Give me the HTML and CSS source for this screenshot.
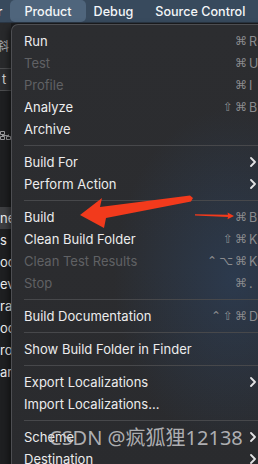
FILE: index.html
```html
<!DOCTYPE html>
<html>
<head>
<meta charset="utf-8">
<link rel="stylesheet" href="styles.css">
</head>
<body>
<div class="screen">
  <div class="menubar">
    <span class="mb-item mb-cut">r</span>
    <span class="mb-item active">Product</span>
    <span class="mb-item">Debug</span>
    <span class="mb-item">Source Control</span>
  </div>
  <div class="app">
    <div class="sidebar">
      <div class="sb-top"><span class="sb-glyph">斜</span></div>
      <div class="sb-bar">t</div>
      <div class="sb-mid">
        <svg class="sb-icon" width="11" height="9" viewBox="0 0 11 9"><path d="M0.5 0.5h4v3h-4zM0.5 5.5h4v3h-4zM6.5 5.5h4v3h-4zM2.5 3.5v2M8.5 3.5v2M2.5 4.5h6" fill="none" stroke="#9a9a9c" stroke-width="1"/></svg>
      </div>
      <div class="sb-row sel">ne</div>
      <div class="sb-row">s</div>
      <div class="sb-row">oc</div>
      <div class="sb-row">ev</div>
      <div class="sb-row">ra</div>
      <div class="sb-row">oc</div>
      <div class="sb-row">ro</div>
      <div class="sb-row">ar</div>
    </div>
  </div>

  <div class="menu">
    <div class="row"><span>Run</span><span class="sc"><span class="mod">⌘</span><span class="key">R</span></span></div>
    <div class="row dis"><span>Test</span><span class="sc"><span class="mod">⌘</span><span class="key">U</span></span></div>
    <div class="row dis"><span>Profile</span><span class="sc"><span class="mod">⌘</span><span class="key">I</span></span></div>
    <div class="row"><span>Analyze</span><span class="sc"><span class="mod">⇧⌘</span><span class="key">B</span></span></div>
    <div class="row"><span>Archive</span></div>
    <div class="sep"></div>
    <div class="row"><span>Build For</span><svg class="chev" width="6" height="10" viewBox="0 0 6 10"><path d="M1 1l4 4-4 4"/></svg></div>
    <div class="row"><span>Perform Action</span><svg class="chev" width="6" height="10" viewBox="0 0 6 10"><path d="M1 1l4 4-4 4"/></svg></div>
    <div class="sep"></div>
    <div class="row"><span>Build</span><span class="sc"><span class="mod">⌘</span><span class="key">B</span></span></div>
    <div class="row"><span>Clean Build Folder</span><span class="sc"><span class="mod">⇧⌘</span><span class="key">K</span></span></div>
    <div class="row dis"><span>Clean Test Results</span><span class="sc"><span class="mod">⌃⌥⌘</span><span class="key">K</span></span></div>
    <div class="row dis"><span>Stop</span><span class="sc"><span class="mod">⌘</span><span class="key">.</span></span></div>
    <div class="sep"></div>
    <div class="row"><span>Build Documentation</span><span class="sc"><span class="mod">⌃⇧⌘</span><span class="key">D</span></span></div>
    <div class="sep"></div>
    <div class="row"><span>Show Build Folder in Finder</span></div>
    <div class="sep"></div>
    <div class="row"><span>Export Localizations</span><svg class="chev" width="6" height="10" viewBox="0 0 6 10"><path d="M1 1l4 4-4 4"/></svg></div>
    <div class="row"><span>Import Localizations...</span></div>
    <div class="sep"></div>
    <div class="row"><span>Scheme</span><svg class="chev" width="6" height="10" viewBox="0 0 6 10"><path d="M1 1l4 4-4 4"/></svg></div>
    <div class="row"><span>Destination</span><svg class="chev" width="6" height="10" viewBox="0 0 6 10"><path d="M1 1l4 4-4 4"/></svg></div>
  </div>

  <svg class="annot" width="258" height="464" viewBox="0 0 258 464">
    <polygon points="80,215 102,198 100,207 190,195.5 193,198 191,201.5 106,218 104,228" fill="#f23a1c"/>
    <polygon points="195,214.2 228,214.8 227.5,212.5 234,216 227.5,219.3 228,217 195,215.4" fill="#f23a1c"/>
  </svg>

  <div class="watermark">CSDN @疯狐狸12138</div>
</div>
</body>
</html>
```

FILE: styles.css
```css
html, body {
  margin: 0;
  padding: 0;
  background: #1d1e20;
}

.screen {
  position: relative;
  width: 258px;
  height: 464px;
  overflow: hidden;
  font-family: Inter, "Liberation Sans", sans-serif;
  color: #e6e6e7;
}

.menubar {
  height: 23px;
  display: flex;
  align-items: center;
  background: #384a5d;
  border-bottom: 1px solid #2a3644;
  box-sizing: border-box;
  white-space: nowrap;
}

.mb-item {
  position: relative;
  padding: 0 11px;
  font-size: 12.6px;
  font-weight: 500;
  color: #f4f6f8;
  line-height: 23px;
}

.mb-cut {
  margin-left: -2.5px;
  padding-left: 0;
}

.mb-item.active::before {
  content: "";
  position: absolute;
  top: 0;
  bottom: 1px;
  left: -3px;
  right: -3px;
  background: #4f657c;
  border-radius: 5px;
  z-index: -1;
}

.mb-item.active {
  z-index: 0;
}

.app {
  display: flex;
  height: 441px;
}

.sidebar {
  width: 11px;
  overflow: hidden;
  font-size: 13px;
  color: #e8e8e8;
  background: #1e1f21;
}

.sb-top {
  height: 45px;
  background: #28292b;
  display: flex;
  align-items: center;
}

.sb-glyph {
  margin-left: -3px;
  font-family: "Noto Sans CJK SC", sans-serif;
  font-size: 12px;
  color: #a9a9ab;
}

.sb-bar {
  height: 21px;
  border-top: 1px solid #4b4c4e;
  border-bottom: 1px solid #4b4c4e;
  background: #2c2d2f;
  line-height: 21px;
  padding-left: 2px;
  color: #cfcfd1;
}

.sb-mid {
  height: 76px;
  position: relative;
}

.sb-icon {
  display: block;
  margin-top: 40px;
}

.sb-row {
  height: 22px;
  line-height: 22px;
  white-space: nowrap;
  color: #f1f1f2;
}

.sb-row.sel {
  background: #3e3f42;
}

.menu {
  position: absolute;
  left: 11px;
  top: 24px;
  width: 262px;
  height: 460px;
  padding: 5px 0;
  box-sizing: border-box;
  background:
    radial-gradient(ellipse 120px 170px at 85% 55%, rgba(45, 75, 115, 0.45), rgba(45, 75, 115, 0) 100%),
    linear-gradient(180deg, #2c2d30 0%, #2a2b2e 100%);
  border-top: 1px solid #4d4e52;
  border-left: 1px solid #4d4e52;
  border-top-left-radius: 7px;
  box-shadow: -2px 2px 6px rgba(0, 0, 0, 0.5);
}

.row {
  height: 22px;
  display: flex;
  align-items: center;
  justify-content: space-between;
  padding-left: 12px;
  padding-right: 12px;
  font-size: 13px;
  color: #ececed;
  white-space: nowrap;
}

.row.dis {
  color: #606164;
}

.sep {
  height: 11px;
  display: flex;
  align-items: center;
  margin-left: 12px;
}

.sep::before {
  content: "";
  display: block;
  width: 100%;
  height: 1px;
  background: #47484b;
}

.sc {
  display: flex;
  align-items: center;
  color: #8a8b8e;
}

.mod {
  font-family: "DejaVu Sans", sans-serif;
  font-size: 12px;
  letter-spacing: 2px;
}

.key {
  width: 12px;
  font-size: 12.5px;
  text-align: left;
}

.chev {
  margin-right: 5px;
  fill: none;
  stroke: #e2e2e4;
  stroke-width: 1.8;
  stroke-linecap: round;
  stroke-linejoin: round;
}

.annot {
  position: absolute;
  left: 0;
  top: 0;
  pointer-events: none;
}

.watermark {
  position: absolute;
  left: 49px;
  top: 424px;
  font-family: "Noto Sans", "Noto Sans CJK SC", sans-serif;
  font-size: 20px;
  line-height: 28px;
  color: rgba(205, 205, 208, 0.82);
  white-space: nowrap;
  pointer-events: none;
}
```
